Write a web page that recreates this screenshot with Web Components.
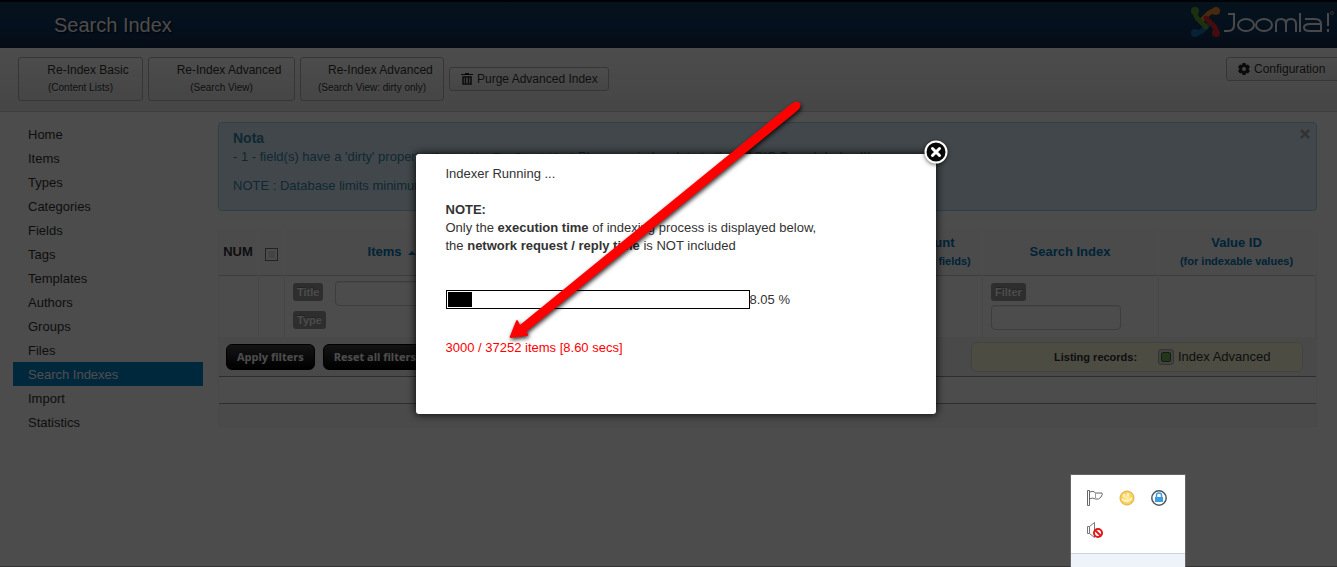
<!DOCTYPE html>
<html lang="en">
<head>
<meta charset="utf-8">
<title>Search Index</title>
<style>
html,body{margin:0;height:100%;overflow:hidden;background:#fff}
body{font:13px/18px "Liberation Sans",Arial,sans-serif;color:#333}
</style>
</head>
<body>
<admin-page></admin-page>
<script>
const define=(name,html)=>customElements.define(name,class extends HTMLElement{
  constructor(){super();this.attachShadow({mode:'open'}).innerHTML=html;}
});

define('joomla-logo',`<style>:host{display:block;width:146px;height:36px}svg{display:block}</style>
<svg width="146" height="36" viewBox="0 0 146 36" fill="none" role="img" aria-label="Joomla!">
<g stroke-width="4.8" stroke-linecap="round" stroke-linejoin="round">
<path d="M25 6q-6 0-9 4l-6 6" stroke="#f08a26"/><path d="M4 28q6 0 9-4l6-6" stroke="#1673b0"/>
<path d="M4 6q0 6 4 9l7 7" stroke="#5aa12c"/><path d="M25 28q0-6-4-9l-6-6" stroke="#e62828"/></g>
<circle cx="4" cy="6" r="4" fill="#5aa12c"/><circle cx="25" cy="6" r="4" fill="#f08a26"/><circle cx="4" cy="28" r="4" fill="#1673b0"/><circle cx="25" cy="28" r="4" fill="#e62828"/>
<g stroke="#f5f5f5" stroke-width="2"><path d="M37 9h6v11q0 6-6 6h-4"/><ellipse cx="55" cy="20" rx="8" ry="6"/><ellipse cx="73" cy="20" rx="8" ry="6"/><path d="M85 27v-8q0-5 5-5t5 5v8m0-8q0-5 5-5t5 5v8M109 8v19M114 14h10q6 0 6 5v7h-11q-6 0-6-3.500t6-3.500h11M137 8v13M137 24v3"/></g>
<circle cx="141" cy="8" r="1.500" stroke="#aaa"/></svg>`);

define('page-header',`<style>:host{display:block}
header{box-sizing:border-box;height:48px;border-top:2px solid #000812;background:linear-gradient(#124060,#103764 50%,#122949);display:flex;align-items:center;justify-content:space-between;padding-left:54px}
h1{margin:0;font-size:20px;line-height:28px;font-weight:400;color:#fff;text-shadow:1px 1px 2px #000}
joomla-logo{margin-top:-4px}
</style><header><h1>Search Index</h1><joomla-logo></joomla-logo></header>`);

define('tool-button',`<style>:host{display:block;flex:none}
button{display:block;box-sizing:border-box;width:100%;font:12px/18px "Liberation Sans",Arial,sans-serif;color:#333;background:linear-gradient(#fff,#e8e8e8);border:1px solid #b5b5b5;border-radius:3px;padding:2px 11px;white-space:nowrap;text-shadow:0 1px #fff}
:host([tall]) button{height:44px;padding:3px 12px;text-align:center}
.main{display:flex;align-items:center;gap:4px}
:host([tall]) .main{display:block;padding-left:15px}
::slotted(small){display:block;font-size:10px;line-height:18px}
</style><button type="button"><span class="main"><slot name="icon"></slot><slot></slot></span><slot name="sub"></slot></button>`);

define('tool-bar',`<style>:host{display:flex;box-sizing:border-box;height:64px;padding:9px 0 0 18px;background:linear-gradient(#fff,#eaeaea);border-bottom:1px solid #d0d0d0;gap:5px;overflow:hidden}
.a{width:125px}.b{width:147px}.c{width:144px}.purge{width:160px;margin-top:10px}.conf{width:116px;margin:0 -5px 0 auto}
svg{display:block;flex:none}</style>
<tool-button tall class="a">Re-Index Basic<small slot="sub">(Content Lists)</small></tool-button>
<tool-button tall class="b">Re-Index Advanced<small slot="sub">(Search View)</small></tool-button>
<tool-button tall class="c">Re-Index Advanced<small slot="sub">(Search View: dirty only)</small></tool-button>
<tool-button class="purge"><svg slot="icon" width="12" height="13" viewBox="0 0 12 13"><path d="M0 1h4V0h4v1h4v1H0z" fill="#222"/><path d="M2 4h8v7H2zM4.500 5v5M7.500 5v5" fill="none" stroke="#222" stroke-width="1.500"/></svg>Purge Advanced Index</tool-button>
<tool-button class="conf"><svg slot="icon" width="12" height="12" viewBox="0 0 12 12"><path d="M4.500 0h3l.5 2 2-.5L12 4l-1.500 2L12 8l-2 2.500L8 10l-.5 2h-3L4 10l-2 .5L0 8l1.500-2L0 4l2-2.500L4 2z" fill="#222"/><circle cx="6" cy="6" r="2" fill="#eee"/></svg>Configuration</tool-button>`);

define('side-nav',`<style>:host{display:block}nav{display:flex;flex-direction:column}
a{font-size:13px;line-height:18px;padding:4px 15px 2px;color:#333;text-decoration:none}
a[aria-current]{background:#0088cc;color:#fff}</style>
<nav aria-label="Sections"><a href="#">Home</a><a href="#">Items</a><a href="#">Types</a><a href="#">Categories</a><a href="#">Fields</a><a href="#">Tags</a><a href="#">Templates</a><a href="#">Authors</a><a href="#">Groups</a><a href="#">Files</a><a href="#" aria-current="page">Search Indexes</a><a href="#">Import</a><a href="#">Statistics</a></nav>`);

define('notice-box',`<style>:host{display:flex;box-sizing:border-box;height:89px;padding:6px 6px 0 14px;background:#d9edf7;border:1px solid #9fd6e6;border-radius:4px;color:#3a87ad;justify-content:space-between;align-items:flex-start}
h2{margin:0;font-size:14px;line-height:19px}p{margin:0 0 10px;line-height:18px;white-space:nowrap}small{font-size:10px}
button{border:0;background:none;padding:0;height:10px;width:10px}svg{display:block}</style>
<div><h2>Nota</h2><p>- 1 - field(s) have a 'dirty' property <small>(Content Lists/Text Search View)</small> Please re-index data to the BASIC Search Index !!!</p><p>NOTE : Database limits minimum</p></div>
<button type="button" aria-label="Close notice"><svg width="10" height="10" viewBox="0 0 10 10"><path d="M1 1l8 8M9 1L1 9" stroke="#aaa" stroke-width="2.500"/></svg></button>`);

define('filter-tag',`<style>:host{display:inline-block;box-sizing:border-box;height:18px;padding:0 4px;background:#999;color:#fff;border-radius:3px;font:bold 11px/18px "Liberation Sans",Arial,sans-serif;text-shadow:0 -1px #777}</style><slot></slot>`);

define('legend-box',`<style>:host{display:flex;box-sizing:border-box;align-items:center;width:332px;height:30px;padding-left:82px;background:#ffffdd;border:1px solid #ddd;border-radius:6px;color:#333}
b{font-size:11px;width:104px}i{box-sizing:border-box;width:16px;height:16px;margin-right:4px;border:1px solid #aaa;border-radius:3px;background:#ddd;padding:2px}i::before{content:"";box-sizing:border-box;display:block;width:10px;height:10px;background:#7eb356;border:1px solid #446632;border-radius:2px}</style>
<b>Listing records:</b><i></i><span>Index Advanced</span>`);

define('index-table',`<style>:host{display:block}
table{width:100%;table-layout:fixed;border-collapse:separate;border-spacing:0;border:1px solid #f3f3f3;border-width:0 1px 1px;box-sizing:border-box}
th,td{padding:0;box-sizing:border-box;text-align:left}
th{height:47px;background:#fafafa;border-bottom:1px solid #ccc;border-right:2px solid #fff;text-align:center;vertical-align:middle;color:#333}
th a{color:#0077b8;text-decoration:none}th small{display:block;font-size:11px}
.q td{height:61px;vertical-align:top;border-right:1px solid #eee;padding:5px 8px 0}
.line{display:flex;gap:12px;align-items:flex-start;height:28px}
.q input{display:block;box-sizing:border-box;width:130px;height:25px;border:1px solid #ccc;border-radius:4px;background:#fff;box-shadow:inset 0 1px 1px #eee}
label{display:block;padding-top:2px;height:20px;line-height:18px}
label+input{margin-top:2px}.line label+input{margin-top:0}
.bar td{height:40px;background:#f4f4f4;padding:0 13px 0 7px;border-bottom:1px solid #999}
.bar div{display:flex;gap:8px;align-items:center}legend-box{margin-left:auto}
.bar button{height:26px;padding:0 10px;border:1px solid #000;border-radius:6px;background:linear-gradient(#444,#000);color:#fff;font:bold 11px/18px "Open Sans","Noto Sans",sans-serif}
.empty td{height:27px;border-bottom:1px solid #999}.foot td{height:22px;background:#f7f7f7}
input[type=checkbox]{appearance:none;box-sizing:border-box;width:13px;height:13px;margin:3px 0 0;vertical-align:middle;border:1px solid #777;background:#e4e4e4;box-shadow:inset 0 0 0 2px #fff}
svg{margin-left:7px;vertical-align:middle}
</style>
<table><colgroup><col style="width:40px"><col style="width:26px"><col style="width:216px"><col><col style="width:130px"><col style="width:176px"><col style="width:157px"></colgroup>
<thead><tr><th scope="col">NUM</th><th scope="col"><input type="checkbox" aria-label="Select all"></th><th scope="col"><a href="#">Items<svg width="8" height="4" viewBox="0 0 8 4"><path d="M0 4l4-4 4 4z" fill="#0077b8"/></svg></a></th><th scope="col"></th><th scope="col"><a href="#">Value Count<small>(for indexable fields)</small></a></th><th scope="col"><a href="#">Search Index</a></th><th scope="col"><a href="#">Value ID<small>(for indexable values)</small></a></th></tr></thead>
<tbody><tr class="q"><td></td><td></td><td><div class="line"><label for="title"><filter-tag>Title</filter-tag></label><input id="title"></div><label><filter-tag>Type</filter-tag></label></td><td></td><td></td><td><label for="filter"><filter-tag>Filter</filter-tag></label><input id="filter"></td><td></td></tr>
<tr class="bar"><td colspan="7"><div><button type="button">Apply filters</button><button type="button">Reset all filters</button><legend-box></legend-box></div></td></tr>
<tr class="empty"><td colspan="7"></td></tr><tr class="foot"><td colspan="7"></td></tr></tbody></table>`);

define('progress-dialog',`<style>:host{display:block;position:relative;box-sizing:border-box;width:520px;height:260px;padding:11px 30px;background:#fff;border-radius:3px;box-shadow:0 0 8px #000;color:#333}
p{margin:0 0 18px}.run{display:flex;align-items:center;margin:35px 0 30px;height:19px}
.track{box-sizing:border-box;width:304px;height:19px;border:1px solid #000;padding:1px}.fill{width:24px;height:15px;background:#000}
.count{color:#f00;margin:0}
.close{position:absolute;top:-14px;right:-12px;width:24px;height:24px;padding:0;border:0;background:none}
.close svg{display:block;overflow:visible;filter:drop-shadow(0 1px 2px #0009)}
.arrow{position:absolute;left:90px;top:-56px;overflow:visible;filter:drop-shadow(1px 2px 2px #000c);pointer-events:none}</style>
<p>Indexer Running ...</p><p><b>NOTE:</b><br>Only the <b>execution time</b> of indexing process is displayed below,<br>the <b>network request / reply time</b> is NOT included</p>
<div class="run"><div class="track" role="progressbar" aria-label="Indexing" aria-valuenow="8.05"><div class="fill"></div></div><span>8.05 %</span></div>
<p class="count">3000 / 37252 items [8.60 secs]</p>
<button class="close" type="button" aria-label="Close"><svg width="24" height="24" viewBox="0 0 24 24"><circle cx="12" cy="12" r="10.500" fill="#080808" stroke="#fff" stroke-width="2"/><path d="M8.500 8.500l7 7M15.500 8.500l-7 7" stroke="#fff" stroke-width="3" stroke-linecap="round"/></svg></button>
<svg class="arrow" width="300" height="245" viewBox="0 0 300 245"><path d="M285 6Q291 2 294 5Q296 9 291 13L20 234L22 236Q23 238 20 238L5 240Q3 240 4 238L10 223Q11 221 12 223L14 227Z" fill="#f00"/></svg>`);

define('tray-popup',`<style>:host{display:grid;box-sizing:border-box;width:116px;height:93px;grid-template:32px 32px / repeat(3,32px);padding:7px 8px;background:linear-gradient(#fff 78px,#c5d4e6 78px,#c5d4e6 79px,#eef3fa 79px);border:1px solid #666;border-bottom:0;place-items:center}svg{display:block}</style>
<svg width="18" height="18" viewBox="0 0 18 18" fill="#fff" stroke="#666"><path d="M1.500 1.500h2v15h-2zM3.500 3q4-2 6 1l6.500 0q1 1-1 4t-5.500 2q-3-2-6 0z"/><path d="M9.500 4v5" stroke="#999"/></svg>
<svg width="18" height="18" viewBox="0 0 18 18"><defs><radialGradient id="g"><stop stop-color="#fff1a0"/><stop offset="1" stop-color="#f5c94c"/></radialGradient></defs><circle cx="9" cy="9" r="7" fill="url(#g)" stroke="#e5b04c"/><path d="M4 10q5 5 10-1M6 5v3M10 4v3" fill="none" stroke="#fff8df" stroke-width="1.500"/></svg>
<svg width="18" height="18" viewBox="0 0 18 18"><circle cx="9" cy="9" r="7.200" fill="#fff" stroke="#4c5961" stroke-width="1.500"/><rect x="5" y="8" width="8" height="5" fill="#3e9de0"/><path d="M6.500 8V6q0-2 2.500-2t2.500 2v2" fill="none" stroke="#3e9de0" stroke-width="1.500"/></svg>
<svg width="18" height="18" viewBox="0 0 18 18" fill="none"><path d="M1.500 5.500h2v7h-2zM3.500 5.500l5-4v15l-5-4" fill="#fff" stroke="#777"/><circle cx="12" cy="12" r="4" fill="#fff" stroke="#e01919" stroke-width="2"/><path d="M9 9l6 6" stroke="#e01919" stroke-width="2"/></svg>`);

define('admin-page',`<style>:host{display:block;position:relative;height:100%;min-height:480px;overflow:hidden;background:#fff}
.body{display:grid;grid-template-columns:190px minmax(0,1fr);column-gap:15px;padding:10px 20px 0 13px}
main{display:grid;row-gap:18px;align-content:start}
.shade{position:absolute;inset:0;background:rgba(0,0,0,.7);border-bottom:1px solid #333;box-sizing:border-box}
progress-dialog{position:absolute;left:calc(50% - 253px);top:154px}
tray-popup{position:absolute;right:151px;bottom:0}</style>
<page-header></page-header><tool-bar></tool-bar>
<div class="body"><side-nav></side-nav><main><notice-box></notice-box><index-table></index-table></main></div>
<div class="shade"></div><progress-dialog role="dialog" aria-label="Indexer"></progress-dialog><tray-popup></tray-popup>`);
</script>
</body>
</html>
